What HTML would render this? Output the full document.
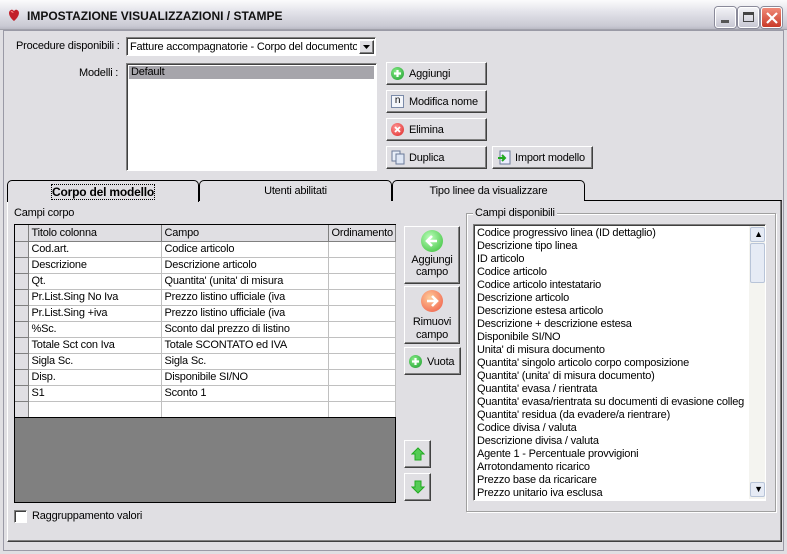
<!DOCTYPE html>
<html><head><meta charset="utf-8"><style>
*{box-sizing:border-box;margin:0;padding:0}
body{width:787px;height:554px;overflow:hidden;background:#e0dfe3;font-family:"Liberation Sans",sans-serif;font-size:11px;letter-spacing:-0.2px;color:#000;position:relative}
.a{position:absolute}
.title{left:0;top:0;width:787px;height:30px;background:linear-gradient(#fbfbfc,#e3e3ea 40%,#c9c9d3 90%,#b9b9c4);border-bottom:1px solid #a0a0aa}
.title span{position:absolute;left:27px;top:9px;font-weight:bold;font-size:12px;letter-spacing:0;color:#111}
.wb{top:7px;width:21px;height:21px;border:1px solid #fff;border-radius:3px;background:linear-gradient(#f2f2f6,#c8c8d4);box-shadow:0 0 0 1px #8a8a9a}
.frame{left:3px;top:30px;width:781px;height:521px;border:1px solid #9a9aa6}
.btn{position:absolute;background:#e0dfe3;border:1px solid;border-color:#fff #404040 #404040 #fff;box-shadow:inset -1px -1px 0 #808080}
.btn span{position:absolute;top:5px}
.sunk{position:absolute;background:#fff;border:1px solid;border-color:#808080 #fff #fff #808080;box-shadow:inset 1px 1px 0 #404040}
.ic{position:absolute;border-radius:50%}
.tab{position:absolute;top:180px;height:21px;border:1px solid #000;border-bottom:none;border-radius:5px 5px 0 0;background:#e0dfe3;text-align:center;padding-top:4px}
table{border-collapse:collapse}
td{height:16px;border-right:1px solid #c0c0c0;border-bottom:1px solid #c0c0c0;padding:0 3px;white-space:nowrap;overflow:hidden}
td.h{background:#e0dfe3;border-color:#808080}
.li div{height:13px;line-height:13px;padding-left:2px;white-space:nowrap}
</style></head><body>
<div class="a title"><svg class="a" style="left:7px;top:8px" width="14" height="14"><path d="M7 13 C1 8 1 3 4 2 C5 1 6 2 7 3 C8 2 9 1 10 2 C13 3 13 8 7 13Z" fill="#c2202a"/><path d="M4 4 C5 3 6 4 6 5" stroke="#f88" fill="none"/></svg><span>IMPOSTAZIONE VISUALIZZAZIONI / STAMPE</span>
<div class="a wb" style="left:715px"><div class="a" style="left:5px;top:12px;width:8px;height:3px;background:#555"></div></div>
<div class="a wb" style="left:738px"><div class="a" style="left:4px;top:4px;width:11px;height:10px;border:1px solid #444;border-top-width:3px"></div></div>
<div class="a wb" style="left:761px;background:linear-gradient(#f08a78,#c93a28)"><svg class="a" style="left:4px;top:4px" width="12" height="12"><path d="M1 1L11 11M11 1L1 11" stroke="#fff" stroke-width="2.2"/></svg></div>
</div>
<div class="a frame"></div>
<div class="a" style="left:16px;top:40px">Procedure disponibili :</div>
<div class="sunk" style="left:126px;top:37px;width:250px;height:19px"><span class="a" style="left:3px;top:3px;width:227px;overflow:hidden;white-space:nowrap">Fatture accompagnatorie - Corpo del documento</span>
<div class="btn" style="left:232px;top:2px;width:15px;height:14px"><svg class="a" style="left:3px;top:4px" width="8" height="5"><path d="M0 0H7L3.5 4Z" fill="#000"/></svg></div></div>
<div class="a" style="left:79px;top:67px">Modelli :</div>
<div class="sunk" style="left:126px;top:63px;width:251px;height:108px"><div class="a" style="left:2px;top:2px;width:245px;height:13px;background:#a6a5ab;padding-left:2px">Default</div></div>

<div class="btn" style="left:386px;top:62px;width:101px;height:23px"><div class="ic" style="left:4px;top:4px;width:13px;height:13px;background:radial-gradient(circle at 40% 35%,#8e8,#1a9a2a)"></div><svg class="a" style="left:6px;top:6px" width="9" height="9"><path d="M4.5 1V8M1 4.5H8" stroke="#fff" stroke-width="2.2"/></svg><span style="left:22px">Aggiungi</span></div>
<div class="btn" style="left:386px;top:90px;width:101px;height:23px"><div class="a" style="left:4px;top:4px;width:13px;height:13px;border:1px solid #7a8aa8;background:#f4f6fb;font-size:10px;line-height:10px;text-align:center">n</div><span style="left:22px">Modifica nome</span></div>
<div class="btn" style="left:386px;top:118px;width:101px;height:23px"><div class="ic" style="left:4px;top:4px;width:13px;height:13px;background:radial-gradient(circle at 40% 35%,#f99,#d22)"></div><svg class="a" style="left:7px;top:7px" width="7" height="7"><path d="M1 1L6 6M6 1L1 6" stroke="#fff" stroke-width="1.8"/></svg><span style="left:22px">Elimina</span></div>
<div class="btn" style="left:386px;top:146px;width:101px;height:23px"><svg class="a" style="left:4px;top:3px" width="14" height="15"><rect x="1" y="1" width="8" height="10" fill="#e8eef8" stroke="#6a7a98"/><rect x="5" y="4" width="8" height="10" fill="#dfe7f5" stroke="#6a7a98"/></svg><span style="left:22px">Duplica</span></div>
<div class="btn" style="left:492px;top:146px;width:101px;height:23px"><svg class="a" style="left:4px;top:3px" width="14" height="15"><rect x="3" y="1" width="10" height="13" fill="#eef" stroke="#6a7a98"/><path d="M1 8H7M5 5L8 8L5 11" stroke="#2a2" stroke-width="2" fill="none"/></svg><span style="left:22px">Import modello</span></div>

<div class="a" style="left:7px;top:200px;width:775px;height:342px;border:1px solid;border-color:#000 #404040 #404040 #fff;box-shadow:inset -1px -1px 0 #808080"></div>
<div class="tab" style="left:199px;width:193px">Utenti abilitati</div>
<div class="tab" style="left:392px;width:193px">Tipo linee da visualizzare</div>
<div class="tab" style="left:7px;width:192px;height:22px;border-bottom:none;background:#e0dfe3;z-index:2"><b style="font-size:12px;outline:1px dotted #000">Corpo del modello</b></div>

<div class="a" style="left:14px;top:207px">Campi corpo</div>
<div class="a" style="left:14px;top:224px;width:382px;height:279px;background:#808080;border:1px solid #000">
<table style="width:380px;background:#fff;table-layout:fixed">
<col style="width:13px"><col style="width:133px"><col style="width:167px"><col style="width:67px">
<tr><td class="h"></td><td class="h">Titolo colonna</td><td class="h">Campo</td><td class="h">Ordinamento</td></tr>
<tr><td class="h"></td><td>Cod.art.</td><td>Codice articolo</td><td></td></tr>
<tr><td class="h"></td><td>Descrizione</td><td>Descrizione articolo</td><td></td></tr>
<tr><td class="h"></td><td>Qt.</td><td>Quantita' (unita' di misura</td><td></td></tr>
<tr><td class="h"></td><td>Pr.List.Sing No Iva</td><td>Prezzo listino ufficiale (iva</td><td></td></tr>
<tr><td class="h"></td><td>Pr.List.Sing +iva</td><td>Prezzo listino ufficiale (iva</td><td></td></tr>
<tr><td class="h"></td><td>%Sc.</td><td>Sconto dal prezzo di listino</td><td></td></tr>
<tr><td class="h"></td><td>Totale Sct con Iva</td><td>Totale SCONTATO ed IVA</td><td></td></tr>
<tr><td class="h"></td><td>Sigla Sc.</td><td>Sigla Sc.</td><td></td></tr>
<tr><td class="h"></td><td>Disp.</td><td>Disponibile SI/NO</td><td></td></tr>
<tr><td class="h"></td><td>S1</td><td>Sconto 1</td><td></td></tr>
<tr><td class="h" style="border-bottom-color:#000"></td><td style="border-bottom-color:#000"></td><td style="border-bottom-color:#000"></td><td style="border-bottom-color:#000"></td></tr>
</table></div>

<div class="btn" style="left:404px;top:226px;width:56px;height:58px;text-align:center"><div class="ic" style="left:16px;top:3px;width:22px;height:22px;background:radial-gradient(circle at 40% 35%,#bfb,#3b3)"></div><svg class="a" style="left:20px;top:7px" width="14" height="14"><path d="M12 7H3M7 2L2 7L7 12" stroke="#fff" stroke-width="2.6" fill="none"/></svg><span style="left:0;top:27px;width:54px;line-height:12px">Aggiungi<br>campo</span></div>
<div class="btn" style="left:404px;top:286px;width:56px;height:58px;text-align:center"><div class="ic" style="left:16px;top:3px;width:22px;height:22px;background:radial-gradient(circle at 40% 35%,#fc9,#e54)"></div><svg class="a" style="left:20px;top:7px" width="14" height="14"><path d="M2 7H11M7 2L12 7L7 12" stroke="#fff" stroke-width="2.6" fill="none"/></svg><span style="left:0;top:29px;width:54px;line-height:13px">Rimuovi<br>campo</span></div>
<div class="btn" style="left:404px;top:347px;width:57px;height:28px"><div class="ic" style="left:4px;top:7px;width:13px;height:13px;background:radial-gradient(circle at 40% 35%,#8e8,#1a9a2a)"></div><svg class="a" style="left:6px;top:9px" width="9" height="9"><path d="M4.5 1V8M1 4.5H8" stroke="#fff" stroke-width="2.2"/></svg><span style="left:22px;top:8px">Vuota</span></div>
<div class="btn" style="left:404px;top:440px;width:27px;height:28px"><svg class="a" style="left:6px;top:6px" width="14" height="14"><path d="M7 1L1 7H4V13H10V7H13Z" fill="#5c5" stroke="#2a2"/></svg></div>
<div class="btn" style="left:404px;top:473px;width:27px;height:28px"><svg class="a" style="left:6px;top:6px" width="14" height="14"><path d="M7 13L1 7H4V1H10V7H13Z" fill="#5c5" stroke="#2a2"/></svg></div>

<div class="a" style="left:466px;top:213px;width:310px;height:299px;border:1px solid #a0a0a0;box-shadow:1px 1px 0 #fff,inset 1px 1px 0 #fff"></div>
<div class="a" style="left:473px;top:207px;background:#e0dfe3;padding:0 2px">Campi disponibili</div>
<div class="sunk li" style="left:473px;top:224px;width:293px;height:277px;padding:2px 0 0 1px;overflow:hidden">
<div>Codice progressivo linea (ID dettaglio)</div><div>Descrizione tipo linea</div><div>ID articolo</div><div>Codice articolo</div><div>Codice articolo intestatario</div><div>Descrizione articolo</div><div>Descrizione estesa articolo</div><div>Descrizione + descrizione estesa</div><div>Disponibile SI/NO</div><div>Unita' di misura documento</div><div>Quantita' singolo articolo corpo composizione</div><div>Quantita' (unita' di misura documento)</div><div>Quantita' evasa / rientrata</div><div>Quantita' evasa/rientrata su documenti di evasione colleg</div><div>Quantita' residua (da evadere/a rientrare)</div><div>Codice divisa / valuta</div><div>Descrizione divisa / valuta</div><div>Agente 1 - Percentuale provvigioni</div><div>Arrotondamento ricarico</div><div>Prezzo base da ricaricare</div><div>Prezzo unitario iva esclusa</div>
<div class="a" style="left:275px;top:1px;width:16px;height:273px;background:#f4f4f0"></div>
<div class="a" style="left:276px;top:2px;width:15px;height:15px;border:1px solid #b8c4d8;border-radius:2px;background:#e6ebf5;text-align:center;font-size:9px;line-height:12px">&#9650;</div>
<div class="a" style="left:276px;top:18px;width:15px;height:40px;border:1px solid #b8c4d8;border-radius:2px;background:#e6ebf5"></div>
<div class="a" style="left:276px;top:257px;width:15px;height:15px;border:1px solid #b8c4d8;border-radius:2px;background:#e6ebf5;text-align:center;font-size:9px;line-height:12px">&#9660;</div>
</div>

<div class="a" style="left:14px;top:510px;width:13px;height:13px;background:#fff;border:1px solid;border-color:#808080 #fff #fff #808080;box-shadow:inset 1px 1px 0 #404040"></div>
<div class="a" style="left:32px;top:510px">Raggruppamento valori</div>
</body></html>
